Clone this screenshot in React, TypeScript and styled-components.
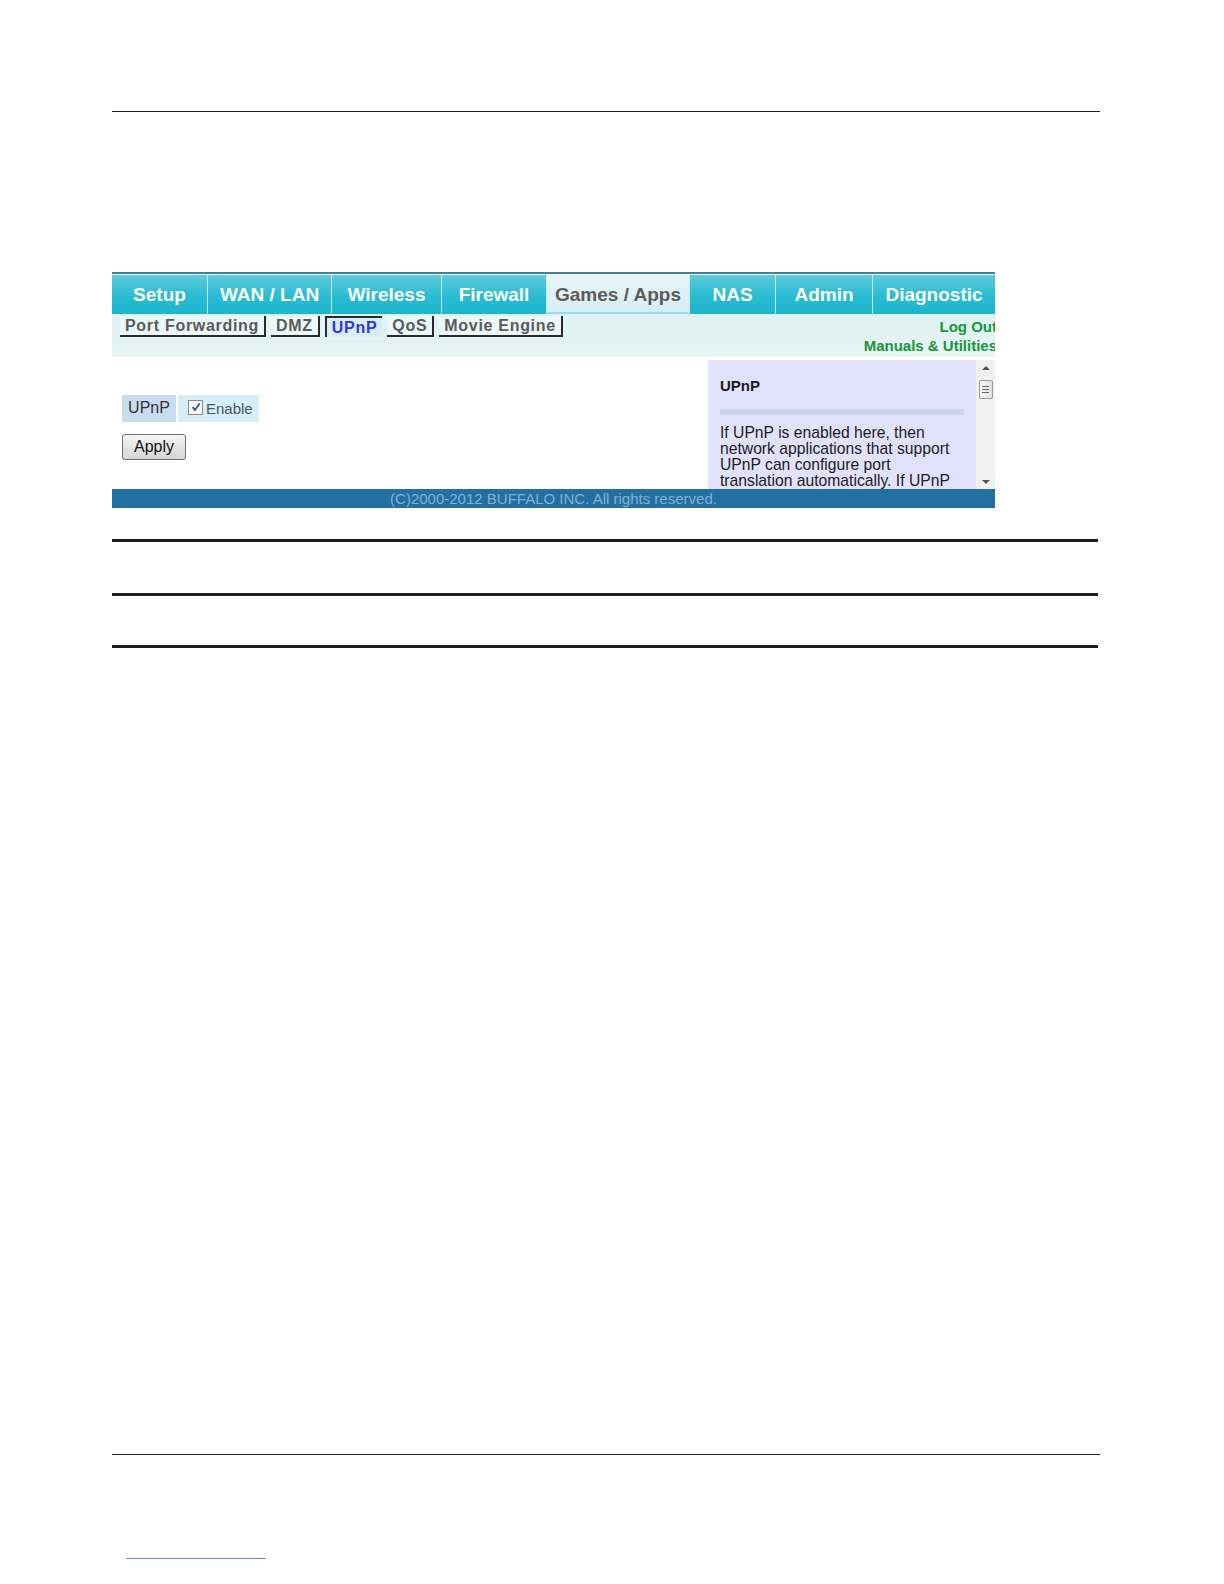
import React from 'react';
import styled, { createGlobalStyle } from 'styled-components';

const GlobalStyle = createGlobalStyle`
  html, body {
    margin: 0;
    padding: 0;
    background: #ffffff;
  }
  body {
    font-family: "Liberation Sans", Arial, sans-serif;
  }
`;

const Page = styled.div`
  width: 1224px;
  height: 1584px;
  background: #ffffff;
  display: flex;
  flex-direction: column;
  padding-left: 112px;
  box-sizing: border-box;
`;

const Rule = styled.div<{ $top: number; $width: number; $thick: number }>`
  margin-top: ${(p) => p.$top}px;
  width: ${(p) => p.$width}px;
  height: ${(p) => p.$thick}px;
  background: #1e1e1e;
  flex-shrink: 0;
`;

const LinkLine = styled.div`
  margin-top: 103px;
  margin-left: 14px;
  width: 140px;
  height: 1px;
  background: #6f7fd6;
`;

const Shot = styled.div`
  margin-top: 160px;
  width: 883px;
  height: 236px;
  overflow: hidden;
  display: flex;
  flex-direction: column;
  border-top: 2px solid #3b7fb0;
  box-sizing: border-box;
  background: #ffffff;
  flex-shrink: 0;
`;

const TabBar = styled.div`
  display: flex;
  margin-top: 1px;
  height: 39px;
`;

const Tab = styled.div<{ $w: number; $active?: boolean }>`
  width: ${(p) => p.$w}px;
  display: flex;
  align-items: center;
  justify-content: center;
  font-size: 19px;
  font-weight: bold;
  color: ${(p) => (p.$active ? '#5b5b5b' : '#ffffff')};
  background: ${(p) =>
    p.$active
      ? 'linear-gradient(#e8f5f7, #d6eef2)'
      : 'linear-gradient(#5ccbdc, #29bcd2 55%, #1bb5cc)'};
  border-left: 1px solid ${(p) => (p.$active ? '#cfe9ee' : '#c4eef4')};
  border-bottom: ${(p) => (p.$active ? '2px solid #9fd9e3' : 'none')};
  box-sizing: border-box;
  padding-top: ${(p) => (p.$active ? '3px' : '0')};
  &:first-child {
    border-left: none;
  }
`;

const SubBar = styled.div`
  height: 43px;
  display: flex;
  justify-content: space-between;
  background: linear-gradient(#dff2f4, #e4f3f4 70%, #e8f5f5);
  padding-left: 8px;
  box-sizing: border-box;
`;

const SubTabs = styled.div`
  display: flex;
  gap: 5px;
  align-items: flex-start;
  padding-top: 2px;
`;

const SubTab = styled.div<{ $active?: boolean }>`
  height: 21px;
  padding: 0 5px;
  display: flex;
  align-items: center;
  font-size: 16px;
  font-weight: bold;
  letter-spacing: 0.7px;
  color: ${(p) => (p.$active ? '#2f35e8' : '#5a5a5a')};
  background: ${(p) => (p.$active ? '#d8eef2' : '#ecf7f8')};
  box-sizing: border-box;
  border-style: solid;
  border-color: #2a2a2a;
  border-width: ${(p) => (p.$active ? '2px 0 0 2px' : '0 2px 2px 0')};
`;

const UserLinks = styled.div`
  display: flex;
  flex-direction: column;
  align-items: flex-end;
  margin-right: -2px;
  padding-top: 3px;
  font-size: 15px;
  font-weight: bold;
  color: #16983a;
  line-height: 19px;
`;

const Content = styled.div`
  flex: 1;
  display: flex;
  justify-content: space-between;
  min-height: 0;
`;

const Form = styled.div`
  padding: 38px 0 0 10px;
  display: flex;
  flex-direction: column;
  gap: 12px;
`;

const FieldRow = styled.div`
  display: flex;
  height: 27px;
`;

const FieldLabel = styled.div`
  width: 54px;
  background: #c9dbf1;
  display: flex;
  align-items: center;
  justify-content: center;
  font-size: 16px;
  color: #333;
  padding-bottom: 2px;
  box-sizing: border-box;
`;

const FieldValue = styled.div`
  margin-left: 2px;
  width: 81px;
  background: #d6eef5;
  display: flex;
  align-items: center;
  padding-left: 10px;
  gap: 3px;
  box-sizing: border-box;
  font-size: 15px;
  color: #4b5560;
`;

const CheckBox = styled.span`
  width: 15px;
  height: 15px;
  border: 1px solid #8a8a8a;
  background: linear-gradient(#f4f4f4, #ffffff);
  display: inline-flex;
  align-items: center;
  justify-content: center;
  margin-top: -3px;
  box-sizing: border-box;
`;

const Button = styled.button`
  width: 64px;
  height: 26px;
  padding: 0;
  font-family: "Liberation Sans", Arial, sans-serif;
  font-size: 16px;
  color: #111;
  border: 1px solid #6f6f6f;
  border-radius: 3px;
  background: linear-gradient(#f6f6f6, #e4e4e4 50%, #d6d6d6);
`;

const HelpWrap = styled.div`
  display: flex;
  padding-top: 3px;
`;

const HelpPanel = styled.div`
  width: 268px;
  background: #e1e1fb;
  padding: 17px 12px 0;
  box-sizing: border-box;
  overflow: hidden;
`;

const HelpTitle = styled.div`
  font-size: 15px;
  font-weight: bold;
  color: #1a1a1a;
`;

const HelpBar = styled.div`
  margin-top: 15px;
  height: 6px;
  width: 244px;
  background: #c9d6ef;
`;

const HelpText = styled.div`
  margin-top: 10px;
  font-size: 15.7px;
  line-height: 16px;
  color: #1c1c1c;
`;

const ScrollBar = styled.div`
  width: 19px;
  background: #f0f0f0;
  display: flex;
  flex-direction: column;
  align-items: center;
`;

const Arrow = styled.div<{ $down?: boolean }>`
  width: 0;
  height: 0;
  border-left: 4px solid transparent;
  border-right: 4px solid transparent;
  ${(p) => (p.$down ? 'border-top: 4px solid #555;' : 'border-bottom: 4px solid #555;')}
  margin-top: ${(p) => (p.$down ? 'auto' : '6px')};
  margin-bottom: ${(p) => (p.$down ? '5px' : '0')};
`;

const Thumb = styled.div`
  margin-top: 10px;
  width: 14px;
  height: 19px;
  border: 1px solid #9a9a9a;
  border-radius: 2px;
  background: linear-gradient(90deg, #f6f6f6, #e2e2e2);
  display: flex;
  flex-direction: column;
  align-items: center;
  justify-content: center;
  gap: 2px;
  box-sizing: border-box;
`;

const Grip = styled.div`
  width: 7px;
  height: 1px;
  background: #666;
`;

const Footer = styled.div`
  height: 19px;
  background: #226fa2;
  color: #86afd3;
  font-size: 15px;
  display: flex;
  align-items: center;
  justify-content: center;
  flex-shrink: 0;
`;

const tabs: { label: string; w: number; active?: boolean }[] = [
  { label: 'Setup', w: 95 },
  { label: 'WAN / LAN', w: 124 },
  { label: 'Wireless', w: 110 },
  { label: 'Firewall', w: 105 },
  { label: 'Games / Apps', w: 143, active: true },
  { label: 'NAS', w: 86 },
  { label: 'Admin', w: 97 },
  { label: 'Diagnostic', w: 123 },
];

const subTabs = ['Port Forwarding', 'DMZ', 'UPnP', 'QoS', 'Movie Engine'];

export default function App() {
  return (
    <>
      <GlobalStyle />
      <Page>
        <Rule $top={111} $width={988} $thick={1} />
        <Shot>
          <TabBar>
            {tabs.map((t) => (
              <Tab key={t.label} $w={t.w} $active={t.active}>
                {t.label}
              </Tab>
            ))}
          </TabBar>
          <SubBar>
            <SubTabs>
              {subTabs.map((s) => (
                <SubTab key={s} $active={s === 'UPnP'}>
                  {s}
                </SubTab>
              ))}
            </SubTabs>
            <UserLinks>
              <span>Log Out</span>
              <span>Manuals &amp; Utilities</span>
            </UserLinks>
          </SubBar>
          <Content>
            <Form>
              <FieldRow>
                <FieldLabel>UPnP</FieldLabel>
                <FieldValue>
                  <CheckBox>
                    <svg width="10" height="10" viewBox="0 0 10 10">
                      <path d="M1.5 5.2 L4 8 L8.7 1.5" fill="none" stroke="#3a46a8" strokeWidth="1.8" />
                    </svg>
                  </CheckBox>
                  Enable
                </FieldValue>
              </FieldRow>
              <div>
                <Button>Apply</Button>
              </div>
            </Form>
            <HelpWrap>
              <HelpPanel>
                <HelpTitle>UPnP</HelpTitle>
                <HelpBar />
                <HelpText>
                  If UPnP is enabled here, then network applications that support UPnP can configure port
                  translation automatically. If UPnP is disabled, this router will not allow
                  applications to change port settings.
                </HelpText>
              </HelpPanel>
              <ScrollBar>
                <Arrow />
                <Thumb>
                  <Grip />
                  <Grip />
                  <Grip />
                </Thumb>
                <Arrow $down />
              </ScrollBar>
            </HelpWrap>
          </Content>
          <Footer>(C)2000-2012 BUFFALO INC. All rights reserved.</Footer>
        </Shot>
        <Rule $top={31} $width={986} $thick={3} />
        <Rule $top={51} $width={986} $thick={3} />
        <Rule $top={49} $width={986} $thick={3} />
        <Rule $top={806} $width={988} $thick={1} />
        <LinkLine />
      </Page>
    </>
  );
}
